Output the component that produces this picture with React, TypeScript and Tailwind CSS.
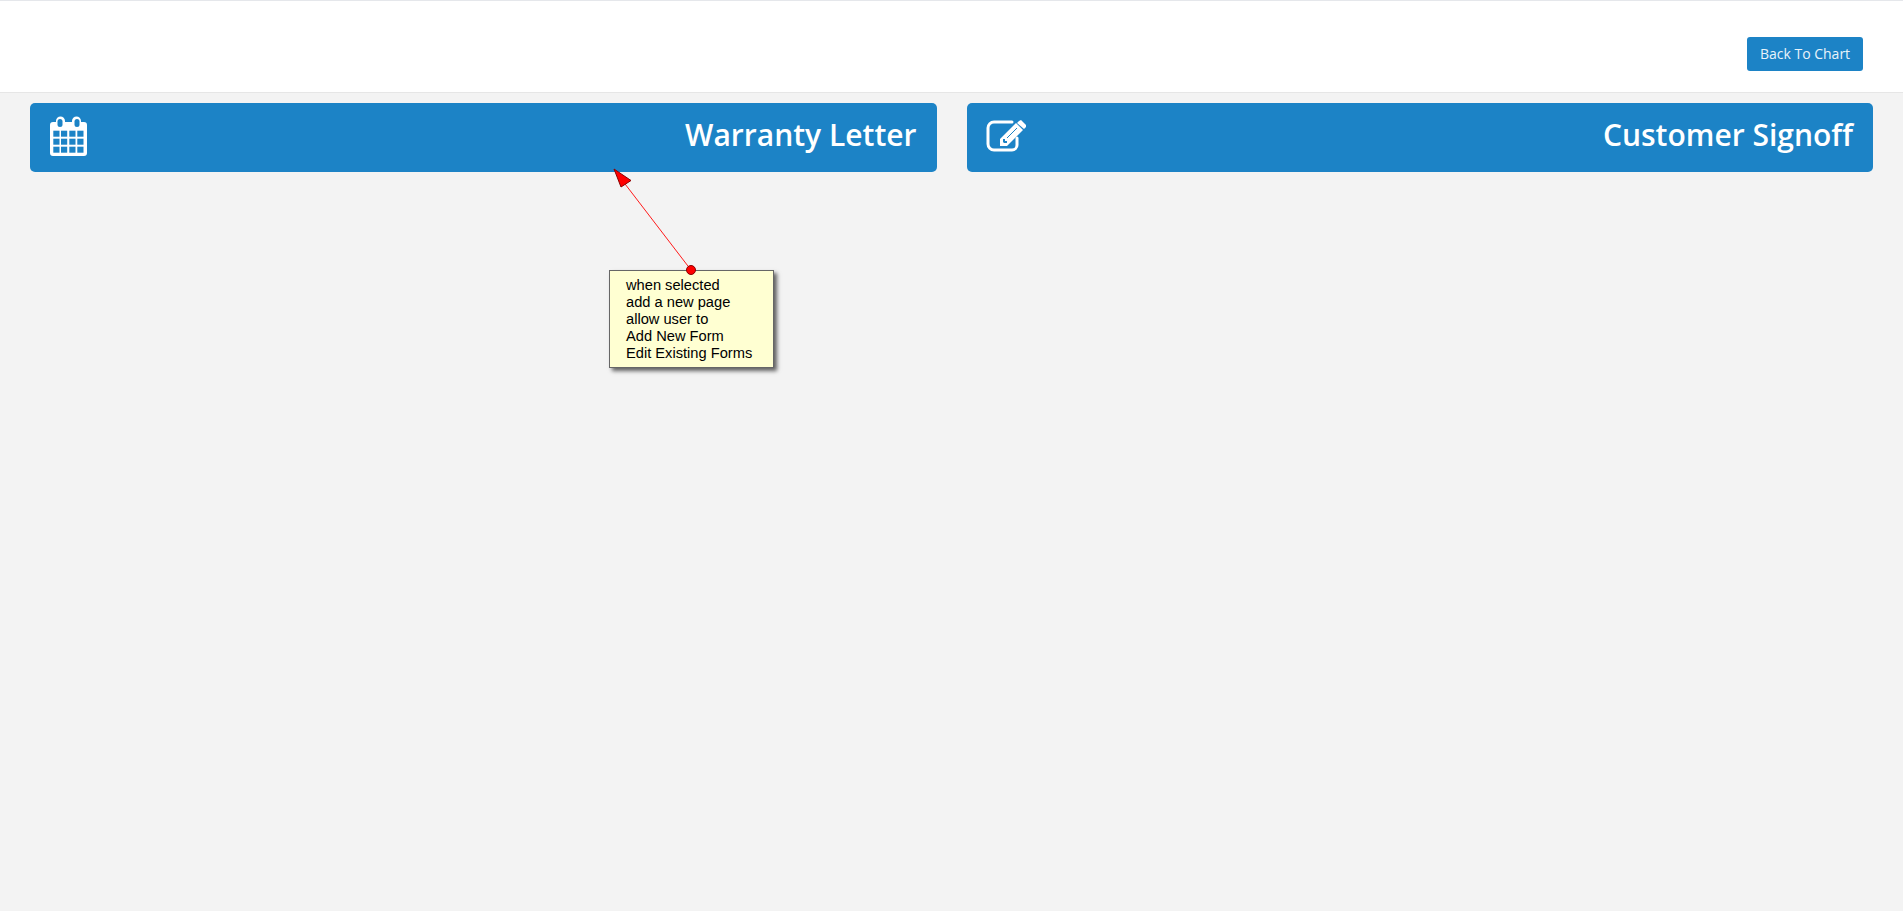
function CalendarIcon() {
  return (
    <svg width="37" height="40" viewBox="0 0 37 40" fill="none">
      <path
        d="M3 6h3V5a4.5 4.5 0 0 1 9 0v1h7V5a4.5 4.5 0 0 1 9 0v1h3a3 3 0 0 1 3 3v28a3 3 0 0 1-3 3H3a3 3 0 0 1-3-3V9a3 3 0 0 1 3-3z"
        fill="#fff"
      />
      <rect x="7.5" y="3" width="5" height="8" rx="2.5" fill="#1c83c6" />
      <rect x="24.5" y="3" width="5" height="8" rx="2.5" fill="#1c83c6" />
      {[14.7, 22.7, 30.7].map((y) =>
        [3.3, 11, 19.3, 27.3].map((x) => (
          <rect key={`${x}-${y}`} x={x} y={y} width="6.2" height="6" fill="#1c83c6" />
        )),
      )}
    </svg>
  );
}

function EditIcon() {
  return (
    <svg width="41" height="32" viewBox="0 0 41 32" fill="none">
      <path
        d="M26 2H8a6 6 0 0 0-6 6v16a6 6 0 0 0 6 6h18a5 5 0 0 0 5-5v-7"
        stroke="#fff"
        strokeWidth="3"
        strokeLinecap="round"
      />
      <path d="M14 26v-7L30 3l7 7-16 16z" fill="#fff" />
      <path d="M33 1l2-1 5 5v2l-2 2-7-6z" fill="#fff" />
      <path d="M17 22v-3h2v2h2v2h-3z" fill="#1c83c6" />
      <path d="M21 18l10-10" stroke="#1c83c6" strokeWidth="1" />
    </svg>
  );
}

function FormCard({ title, icon, iconClass }: { title: string; icon: React.ReactNode; iconClass: string }) {
  return (
    <div className="h-[69px] flex-1 rounded-[5px] bg-[#1c83c6] flex items-center justify-between pr-5">
      <div className={iconClass}>{icon}</div>
      <h2 className="pb-[5px] text-[30px] leading-none font-semibold text-white">{title}</h2>
    </div>
  );
}

export default function App() {
  return (
    <div
      className="relative min-h-[911px] bg-[#f3f3f3]"
      style={{ fontFamily: '"Open Sans", sans-serif' }}
    >
      <header className="h-[93px] bg-white border-t border-t-[#e5e7eb] border-b border-b-[#e6e6e6] flex justify-end pt-[36px] pr-10">
        <button className="h-[34px] w-[116px] rounded-[3px] bg-[#1c83c6] pb-[2px] text-[14px] text-[#e8f3fa]">
          Back To Chart
        </button>
      </header>

      <div className="flex gap-[30px] pt-[10px] pl-[30px] pr-[30px]">
        <FormCard title="Warranty Letter" icon={<CalendarIcon />} iconClass="pl-5 pb-[3px]" />
        <FormCard title="Customer Signoff" icon={<EditIcon />} iconClass="pl-[19px] pb-[4px]" />
      </div>

      {/* sticky note and its arrow sit on top of the page */}
      <div
        className="absolute left-[609px] top-[270px] w-[165px] h-[98px] bg-[#ffffd2] border border-[#666] shadow-[3px_3px_4px_rgba(0,0,0,0.6)] pl-4 pt-[6px] text-[14.67px] leading-[17px] text-black"
        style={{ fontFamily: '"Liberation Sans", Arial, sans-serif' }}
      >
        <div>when selected</div>
        <div>add a new page</div>
        <div>allow user to</div>
        <div>Add New Form</div>
        <div>Edit Existing Forms</div>
      </div>
      <svg className="absolute left-[605px] top-[160px]" width="100" height="120" viewBox="605 160 100 120" fill="none">
        <line x1="691" y1="270" x2="622" y2="180" stroke="#ff1a1a" strokeWidth="1" />
        <path d="M614 169l7 18 10-6.500z" fill="#ff0000" stroke="#8a0000" strokeWidth="1" />
        <circle cx="691" cy="270" r="4.500" fill="#ff0000" stroke="#8a0000" strokeWidth="1" />
      </svg>
    </div>
  );
}
